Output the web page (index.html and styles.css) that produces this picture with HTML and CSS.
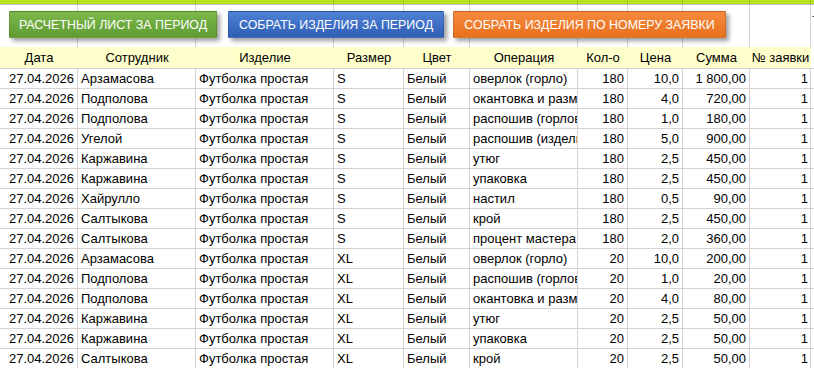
FILE: index.html
```html
<!DOCTYPE html>
<html lang="ru">
<head>
<meta charset="utf-8">
<title>Лист</title>
<link rel="stylesheet" href="styles.css">
</head>
<body>
<div class="sheet">
  <div class="grid">
    <div class="c top"></div><div class="c top"></div><div class="c top"></div><div class="c top"></div><div class="c top"></div><div class="c top"></div><div class="c top"></div><div class="c top"></div><div class="c top"></div><div class="c top"></div><div class="c top last"></div>

    <div class="c btnrow"></div><div class="c btnrow"></div><div class="c btnrow"></div><div class="c btnrow"></div><div class="c btnrow"></div><div class="c btnrow"></div><div class="c btnrow"></div><div class="c btnrow"></div><div class="c btnrow"></div><div class="c btnrow"></div><div class="c btnrow last dash">-</div>

    <div class="c hd">Дата</div><div class="c hd">Сотрудник</div><div class="c hd">Изделие</div><div class="c hd">Размер</div><div class="c hd">Цвет</div><div class="c hd">Операция</div><div class="c hd">Кол-о</div><div class="c hd">Цена</div><div class="c hd">Сумма</div><div class="c hd">№ заявки</div><div class="c hd blank"></div>

    <div class="c r">27.04.2026</div><div class="c">Арзамасова</div><div class="c">Футболка простая</div><div class="c">S</div><div class="c">Белый</div><div class="c">оверлок (горло)</div><div class="c r">180</div><div class="c r">10,0</div><div class="c r">1 800,00</div><div class="c r">1</div><div class="c e"></div>
    <div class="c r">27.04.2026</div><div class="c">Подполова</div><div class="c">Футболка простая</div><div class="c">S</div><div class="c">Белый</div><div class="c">окантовка и размер</div><div class="c r">180</div><div class="c r">4,0</div><div class="c r">720,00</div><div class="c r">1</div><div class="c e"></div>
    <div class="c r">27.04.2026</div><div class="c">Подполова</div><div class="c">Футболка простая</div><div class="c">S</div><div class="c">Белый</div><div class="c">распошив (горловина)</div><div class="c r">180</div><div class="c r">1,0</div><div class="c r">180,00</div><div class="c r">1</div><div class="c e"></div>
    <div class="c r">27.04.2026</div><div class="c">Угелой</div><div class="c">Футболка простая</div><div class="c">S</div><div class="c">Белый</div><div class="c">распошив (изделие)</div><div class="c r">180</div><div class="c r">5,0</div><div class="c r">900,00</div><div class="c r">1</div><div class="c e"></div>
    <div class="c r">27.04.2026</div><div class="c">Каржавина</div><div class="c">Футболка простая</div><div class="c">S</div><div class="c">Белый</div><div class="c">утюг</div><div class="c r">180</div><div class="c r">2,5</div><div class="c r">450,00</div><div class="c r">1</div><div class="c e"></div>
    <div class="c r">27.04.2026</div><div class="c">Каржавина</div><div class="c">Футболка простая</div><div class="c">S</div><div class="c">Белый</div><div class="c">упаковка</div><div class="c r">180</div><div class="c r">2,5</div><div class="c r">450,00</div><div class="c r">1</div><div class="c e"></div>
    <div class="c r">27.04.2026</div><div class="c">Хайрулло</div><div class="c">Футболка простая</div><div class="c">S</div><div class="c">Белый</div><div class="c">настил</div><div class="c r">180</div><div class="c r">0,5</div><div class="c r">90,00</div><div class="c r">1</div><div class="c e"></div>
    <div class="c r">27.04.2026</div><div class="c">Салтыкова</div><div class="c">Футболка простая</div><div class="c">S</div><div class="c">Белый</div><div class="c">крой</div><div class="c r">180</div><div class="c r">2,5</div><div class="c r">450,00</div><div class="c r">1</div><div class="c e"></div>
    <div class="c r">27.04.2026</div><div class="c">Салтыкова</div><div class="c">Футболка простая</div><div class="c">S</div><div class="c">Белый</div><div class="c">процент мастера</div><div class="c r">180</div><div class="c r">2,0</div><div class="c r">360,00</div><div class="c r">1</div><div class="c e"></div>
    <div class="c r">27.04.2026</div><div class="c">Арзамасова</div><div class="c">Футболка простая</div><div class="c">XL</div><div class="c">Белый</div><div class="c">оверлок (горло)</div><div class="c r">20</div><div class="c r">10,0</div><div class="c r">200,00</div><div class="c r">1</div><div class="c e"></div>
    <div class="c r">27.04.2026</div><div class="c">Подполова</div><div class="c">Футболка простая</div><div class="c">XL</div><div class="c">Белый</div><div class="c">распошив (горловина)</div><div class="c r">20</div><div class="c r">1,0</div><div class="c r">20,00</div><div class="c r">1</div><div class="c e"></div>
    <div class="c r">27.04.2026</div><div class="c">Подполова</div><div class="c">Футболка простая</div><div class="c">XL</div><div class="c">Белый</div><div class="c">окантовка и размер</div><div class="c r">20</div><div class="c r">4,0</div><div class="c r">80,00</div><div class="c r">1</div><div class="c e"></div>
    <div class="c r">27.04.2026</div><div class="c">Каржавина</div><div class="c">Футболка простая</div><div class="c">XL</div><div class="c">Белый</div><div class="c">утюг</div><div class="c r">20</div><div class="c r">2,5</div><div class="c r">50,00</div><div class="c r">1</div><div class="c e"></div>
    <div class="c r">27.04.2026</div><div class="c">Каржавина</div><div class="c">Футболка простая</div><div class="c">XL</div><div class="c">Белый</div><div class="c">упаковка</div><div class="c r">20</div><div class="c r">2,5</div><div class="c r">50,00</div><div class="c r">1</div><div class="c e"></div>
    <div class="c r">27.04.2026</div><div class="c">Салтыкова</div><div class="c">Футболка простая</div><div class="c">XL</div><div class="c">Белый</div><div class="c">крой</div><div class="c r">20</div><div class="c r">2,5</div><div class="c r">50,00</div><div class="c r">1</div><div class="c e"></div>
  </div>

  <button class="btn btn-green">РАСЧЕТНЫЙ ЛИСТ ЗА ПЕРИОД</button>
  <button class="btn btn-blue">СОБРАТЬ ИЗДЕЛИЯ ЗА ПЕРИОД</button>
  <button class="btn btn-orange">СОБРАТЬ ИЗДЕЛИЯ ПО НОМЕРУ ЗАЯВКИ</button>
</div>
</body>
</html>
```

FILE: styles.css
```css
* { box-sizing: border-box; }

html, body {
  margin: 0;
  padding: 0;
  background: #ffffff;
}

.sheet {
  position: relative;
  width: 814px;
  height: 368px;
  overflow: hidden;
  font-family: "Liberation Sans", Arial, sans-serif;
  font-size: 13px;
  color: #000;
}

.grid {
  display: grid;
  grid-template-columns: 78px 118px 138px 70px 66px 108px 50px 55px 67px 61px 1fr;
  grid-template-rows: 5px 42px 22px repeat(15, 20px);
}

.c {
  border-right: 1px solid #d4d4d4;
  border-bottom: 1px solid #d4d4d4;
  padding: 1px 3px 0 3px;
  line-height: 18px;
  white-space: nowrap;
  overflow: hidden;
}

.c.r {
  text-align: right;
  padding-right: 3px;
}

.c.r:nth-child(11n+10) {
  padding-right: 2px;
}

.c.top {
  background: #b5e31d;
  border-right-color: #9cc618;
  border-bottom-color: #c2c2c2;
  padding: 0;
}

.c.btnrow {
  border-bottom: none;
  padding: 0;
}

.c.last {
  border-right: none;
}

.c.dash {
  font-size: 10px;
  line-height: 10px;
  padding: 6px 0 0 1px;
  color: #333;
}

.c.hd {
  background: #ffffcc;
  border-right: none;
  text-align: center;
  line-height: 20px;
  padding: 1px 0 0 0;
}

.c.hd.blank {
  background: #ffffff;
}

.c.e {
  border-right: none;
}

.btn {
  position: absolute;
  top: 11px;
  height: 27px;
  padding: 0;
  border: 1px solid rgba(0, 0, 0, 0.12);
  border-radius: 1px;
  color: #ffffff;
  font-family: "Liberation Sans", Arial, sans-serif;
  font-size: 12.4px;
  line-height: 26px;
  text-align: center;
  white-space: nowrap;
  box-shadow: 3px 3px 4px rgba(0, 0, 0, 0.38);
}

.btn-green {
  left: 9px;
  width: 208px;
  background: linear-gradient(#7cb84b, #5f9c32);
}

.btn-blue {
  left: 228px;
  width: 216px;
  background: linear-gradient(#4e81d6, #2f5fb5);
}

.btn-orange {
  left: 453px;
  width: 273px;
  background: linear-gradient(#f58a3e, #e8701e);
}
```
